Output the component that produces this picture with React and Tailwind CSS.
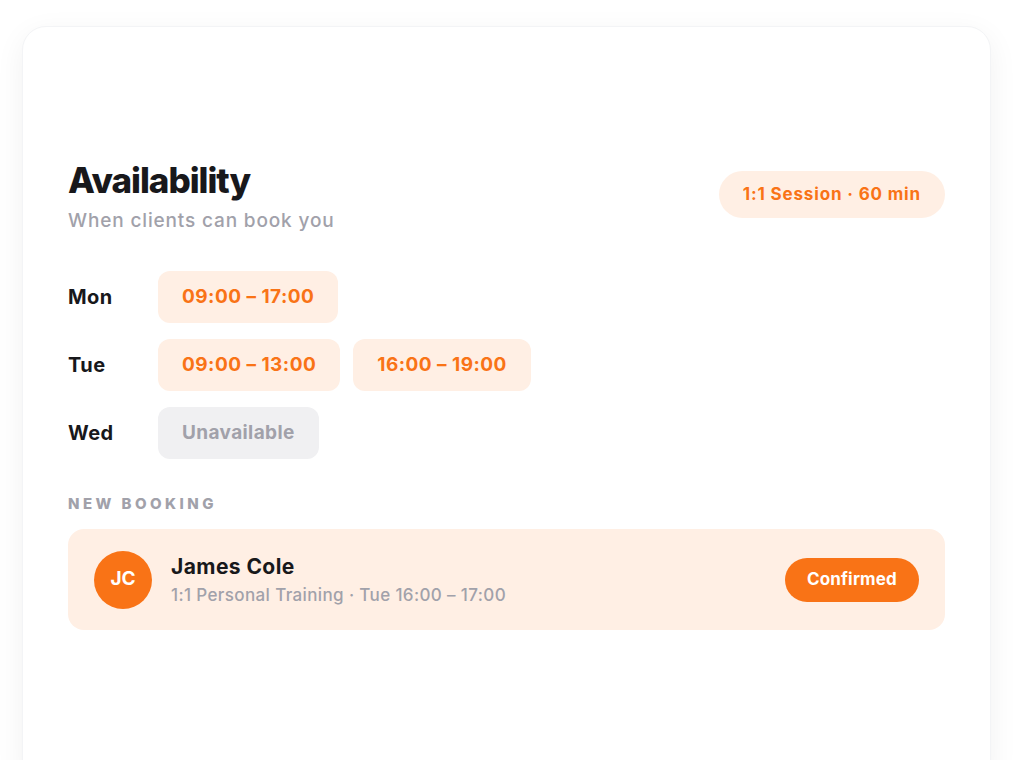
const slots = [
  { day: "Mon", times: ["09:00 – 17:00"] },
  { day: "Tue", times: ["09:00 – 13:00", "16:00 – 19:00"] },
  { day: "Wed", times: [] },
];

const App = () => {
  return (
    <div className="min-h-screen bg-white px-[22px] pt-[26px] font-['Inter',sans-serif]">
      <div className="min-h-[760px] rounded-[24px] border border-gray-100 bg-white px-[45px] pt-[133px] shadow-[0_8px_30px_rgba(0,0,0,0.06)]">
        <div className="flex items-start justify-between">
          <div>
            <h1 className="text-[35px] font-extrabold leading-[40px] tracking-[-0.03em] text-[#18181b]">Availability</h1>
            <p className="mt-[8px] text-[19px] font-medium leading-[26px] tracking-[0.045em] text-[#a1a1aa]">
              When clients can book you
            </p>
          </div>
          <div className="mt-[11px] flex h-[47px] items-center rounded-full bg-[#ffefe4] px-[24px] text-[17px] font-bold tracking-[0.05em] text-[#f97316]">
            1:1 Session · 60 min
          </div>
        </div>

        <div className="mt-[37px] flex flex-col gap-[16px]">
          {slots.map((row) => (
            <div key={row.day} className="flex items-center">
              <div className="w-[90px] text-[20px] font-bold tracking-[0.02em] text-[#18181b]">{row.day}</div>
              <div className="flex gap-[13px]">
                {row.times.length ? (
                  row.times.map((t) => (
                    <div
                      key={t}
                      className="flex h-[52px] items-center rounded-[12px] bg-[#ffefe4] px-[24px] text-[19px] font-bold tracking-[0.025em] text-[#f97316]"
                    >
                      {t}
                    </div>
                  ))
                ) : (
                  <div className="flex h-[52px] items-center rounded-[12px] bg-[#f0f0f2] px-[24px] text-[19px] font-bold tracking-[0.02em] text-[#a1a1aa]">
                    Unavailable
                  </div>
                )}
              </div>
            </div>
          ))}
        </div>

        <div className="mt-[35px] text-[15px] font-extrabold uppercase leading-[20px] tracking-[0.23em] text-[#a1a1aa]">
          New Booking
        </div>

        <div className="mt-[15px] flex h-[101px] items-center rounded-[16px] bg-[#ffefe4] px-[26px]">
          <div className="flex h-[58px] w-[58px] items-center justify-center rounded-full bg-[#f97316] text-[19px] font-bold text-white">
            JC
          </div>
          <div className="ml-[19px] flex-1">
            <div className="text-[21px] font-bold leading-[28px] tracking-[0.02em] text-[#18181b]">James Cole</div>
            <div className="mt-[2px] text-[17px] font-medium leading-[24px] tracking-[0.022em] text-[#a1a1aa]">
              1:1 Personal Training · Tue 16:00 – 17:00
            </div>
          </div>
          <div className="flex h-[44px] items-center rounded-full bg-[#f97316] px-[22px] text-[17px] font-bold tracking-[0.01em] text-white">
            Confirmed
          </div>
        </div>
      </div>
    </div>
  );
};

export default App;
